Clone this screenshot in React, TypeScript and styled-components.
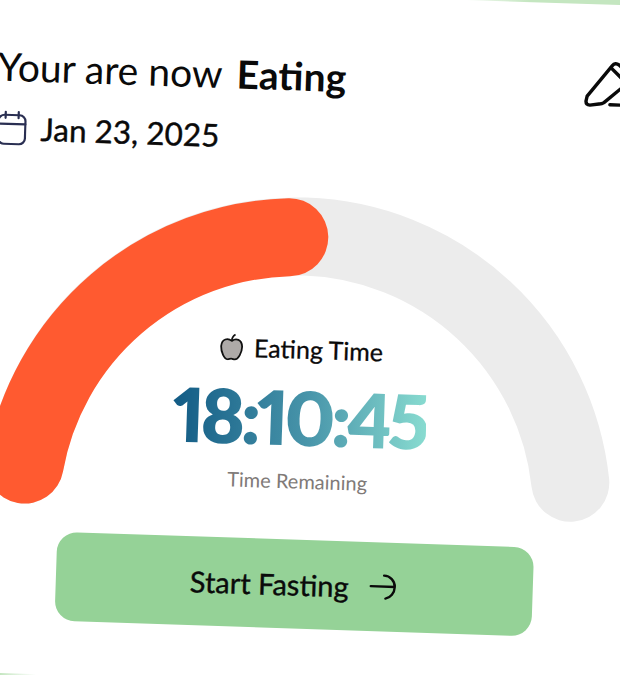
import { createGlobalStyle } from "styled-components";
import styled from "styled-components";

const GlobalStyle = createGlobalStyle`
  html, body {
    margin: 0;
    padding: 0;
    background: #fff;
  }
`;

const Stage = styled.div`
  width: 620px;
  height: 675px;
  overflow: hidden;
  background: linear-gradient(90deg, #c4e6c0 0, #fff 36px, #fff 450px, #c4e6c0 530px);
`;

const Card = styled.main`
  box-sizing: border-box;
  width: 660px;
  height: 688px;
  margin: -5px 0 0 -20px;
  padding: 60px 0 0 9px;
  background: #fff;
  transform: rotate(1.9deg);
  transform-origin: 330px 342px;
  font-family: Lato, "Liberation Sans", sans-serif;
  color: #0a0a0a;
`;

const Header = styled.header`
  display: flex;
  justify-content: space-between;
  align-items: flex-start;
  padding-right: 8px;
`;

const Title = styled.h1`
  margin: 0;
  font-size: 39px;
  line-height: 42px;
  font-weight: 400;
  strong {
    font-weight: 700;
    margin-left: 5px;
  }
`;

const DateRow = styled.div`
  display: flex;
  align-items: center;
  gap: 14px;
  margin-top: 23px;
  font-size: 31.5px;
  line-height: 36px;
  -webkit-text-stroke: 0.4px #0a0a0a;
`;

const CalendarIcon = styled.svg`
  margin-left: 1px;
`;

const PenIcon = styled.svg`
  margin-top: -5px;
`;

const Gauge = styled.section`
  position: relative;
  width: 640px;
  margin: 53px 0 0 11px;
  height: 331px;
  svg.arc {
    overflow: visible;
  }
`;

const Readout = styled.div`
  position: absolute;
  left: 0;
  right: 36px;
  top: 125px;
  display: flex;
  flex-direction: column;
  align-items: center;
`;

const Label = styled.div`
  display: flex;
  align-items: center;
  gap: 10px;
  font-size: 25px;
  line-height: 30px;
  -webkit-text-stroke: 0.3px #0a0a0a;
`;

const Clock = styled.div`
  margin-top: 6px;
  font-size: 75px;
  line-height: 94px;
  font-weight: 800;
  letter-spacing: -4px;
  font-variant-numeric: proportional-nums;
  background: linear-gradient(90deg, #125b85 0%, #4a97ab 55%, #88dbd0 100%);
  -webkit-background-clip: text;
  background-clip: text;
  color: transparent;
`;

const Hint = styled.div`
  margin-top: 4px;
  font-size: 20px;
  line-height: 26px;
  color: #807a78;
`;

const StartButton = styled.button`
  display: flex;
  align-items: center;
  justify-content: center;
  gap: 20px;
  width: 477px;
  height: 89px;
  margin: 0 0 0 75px;
  padding: 0 2px 0 0;
  border: 0;
  border-radius: 20px;
  background: #95d297;
  color: #0a0a0a;
  font-family: inherit;
  font-size: 29px;
  -webkit-text-stroke: 0.4px #0a0a0a;
`;

const App = () => (
  <>
    <GlobalStyle />
    <Stage>
      <Card>
        <Header>
          <div>
            <Title>
              Your are now <strong>Eating</strong>
            </Title>
            <DateRow>
              <CalendarIcon width="30" height="36" viewBox="0 0 30 36" fill="none" stroke="#2a2f52" strokeWidth="2.2" strokeLinecap="round">
                <rect x="1.5" y="5" width="27" height="29" rx="6" />
                <path d="M1.5 14h27M8.500 2v6M21.500 2v6" />
              </CalendarIcon>
              Jan 23, 2025
            </DateRow>
          </div>
          <PenIcon width="56" height="50" viewBox="0 0 56 50" fill="none" stroke="#0a0a0a" strokeWidth="3.4" strokeLinecap="round" strokeLinejoin="round">
            <path d="M3 37L27 6q3-4 7-1l11 10q3 3 0 6L20 43q-2 1.500-5 1.500L6 46q-4 0-4-4z" />
            <path d="M26 8l16 15M26 45h26" />
          </PenIcon>
        </Header>
        <Gauge>
          <svg className="arc" width="640" height="331" viewBox="0 0 640 331" fill="none" strokeWidth="78" strokeLinecap="round">
            <path d="M29 265A275.7 275.7 0 0 1 575 265" stroke="#ececec" />
            <path d="M29 265A275.7 275.7 0 0 1 286 29" stroke="#ff5a30" />
          </svg>
          <Readout>
            <Label>
              <svg width="24" height="27" viewBox="0 0 24 27" stroke="#111" strokeWidth="1.8" strokeLinejoin="round">
                <path d="M12 7.500C8 4.500 2 5.500 1.500 13c0 6 3.500 13 7 13 1.500 0 2-.8 3.500-.8s2 .8 3.500.8c3.500 0 7-7 7-13C22 5.500 16 4.500 12 7.500z" fill="#aeaaa8" />
                <path d="M12 7.500c0-3 1-5 3.500-6.500" fill="none" />
              </svg>
              Eating Time
            </Label>
            <Clock>18:10:45</Clock>
            <Hint>Time Remaining</Hint>
          </Readout>
        </Gauge>
        <StartButton>
          Start Fasting
          <svg width="28" height="28" viewBox="0 0 28 28" fill="none" stroke="#0a0a0a" strokeWidth="2.4" strokeLinecap="round">
            <path d="M2 13h24M15 2c6 0 11 5 11 11s-4 11-9 12" />
          </svg>
        </StartButton>
      </Card>
    </Stage>
  </>
);

export default App;
